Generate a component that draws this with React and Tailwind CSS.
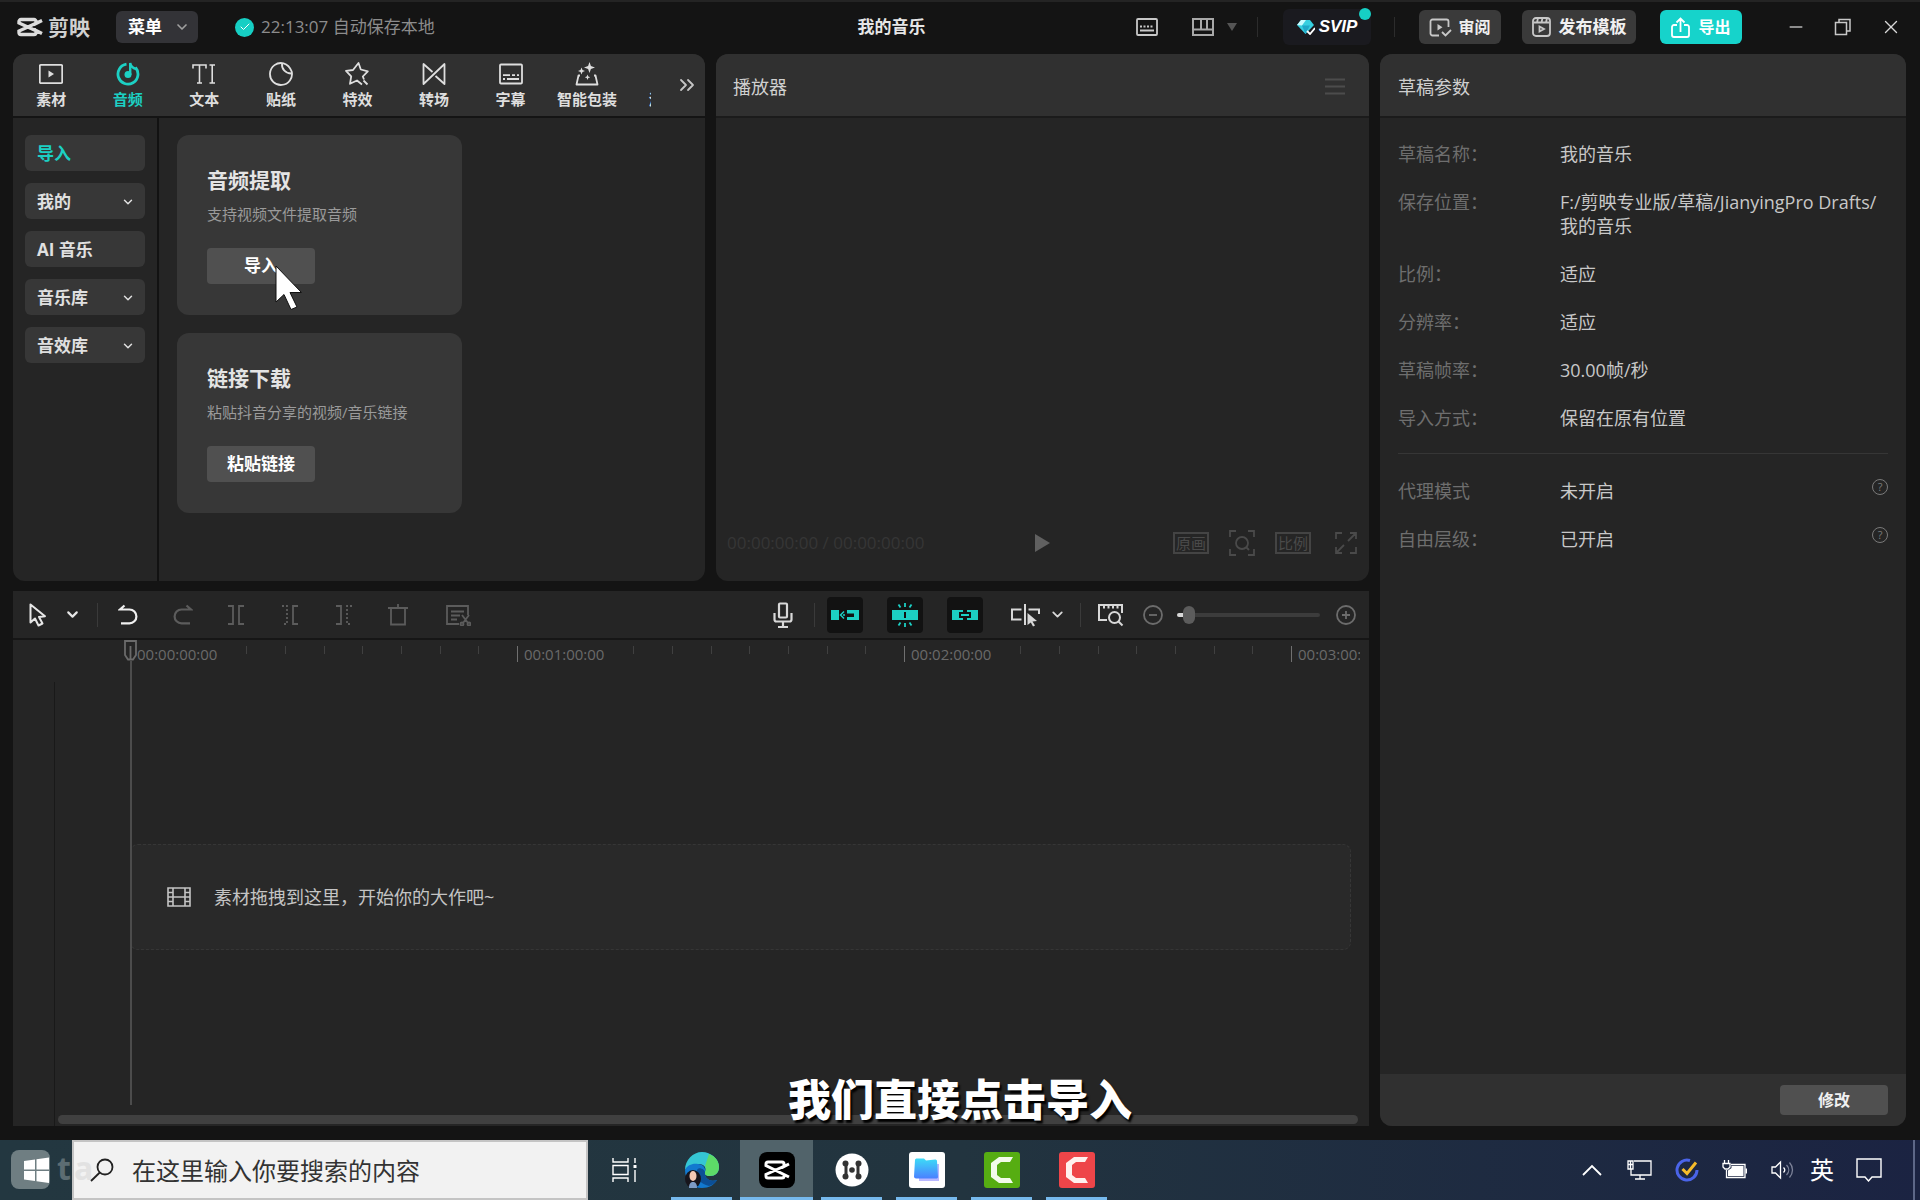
import React, { useState } from "react";
import { ChevronDown, ChevronsRight, X, Minus, Check } from "lucide-react";

const Icon = ({ size = 24, width, height, className = "", box = "0 0 24 24", children }) => (
  <svg
    width={width || size}
    height={height || size}
    viewBox={box}
    fill="none"
    stroke="currentColor"
    strokeWidth="1.8"
    className={`shrink-0 ${className}`}
    aria-hidden="true"
  >
    {children}
  </svg>
);

const CutLogo = ({ className, width = 26, height = 20 }) => (
  <Icon width={width} height={height} box="0 0 26 20" className={className}>
    <path d="M25 3.5 19 6.5V4.5a2 2 0 0 0-2-2H4a2 2 0 0 0-2 2V6l23 10.500M25 3.500 2 14v1.500a2 2 0 0 0 2 2h13a2 2 0 0 0 2-2v-2l6 3" strokeWidth="3.4" />
  </Icon>
);

const tabs = [
  {
    name: "素材",
    icon: (
      <>
        <rect x="0.8" y="2.800" width="22.400" height="18.400" rx="1.200" />
        <path d="M9.500 8.500v7l5.500-3.500z" fill="currentColor" stroke="none" />
      </>
    ),
  },
  {
    name: "音频",
    icon: (
      <>
        <path d="M10.500 2.200A10 10 0 1 0 19.500 5.500" strokeWidth="2.800" />
        <circle cx="12" cy="12.500" r="3.500" fill="currentColor" stroke="none" />
        <path d="M14.200 13V1c.5 3 2.500 5 6 6" strokeWidth="2.400" />
      </>
    ),
  },
  {
    name: "文本",
    icon: (
      <path d="M1 6.500V3h13v3.500M7.500 3v18M5 21h5M17.500 3H23M17.500 21H23M20.200 3v18" strokeWidth="1.600" />
    ),
  },
  {
    name: "贴纸",
    icon: (
      <>
        <path d="M14.500 1.300A11 11 0 1 0 22.700 9.500C21 5 18.500 2.500 14.500 1.300z" strokeLinejoin="round" />
        <path d="M13 1.200c-.5 6 3.500 10.500 9.800 10.300" />
      </>
    ),
  },
  {
    name: "特效",
    icon: (
      <path d="M17 22.500 12 18.500 5 21.800l1.200-7.500L1 8.800l7-.8L13.500 1l2.300 6.500 7 1.800-5 5.200 1.200 3M18.500 18.500l4 4" strokeLinejoin="round" />
    ),
  },
  {
    name: "转场",
    icon: (
      <path d="M10.500 10 1.500 2v20L22.500 2v20l-9-8" strokeLinejoin="round" />
    ),
  },
  {
    name: "字幕",
    icon: (
      <>
        <rect x="1" y="2.500" width="22" height="19" rx="1" />
        <path d="M4 13.200h7M13 13.200h3M18 13.200h2M4 17h2M8 17h12" />
      </>
    ),
  },
  {
    name: "智能包装",
    icon: (
      <>
        <path d="M5 13.500H3.500L1.500 22.500h21L20.500 13.500H19" strokeLinejoin="round" />
        <path
          d="M14.500 0l1.400 4.100L20 5.500l-4.100 1.400L14.500 11l-1.400-4.100L9 5.500l4.100-1.400zM6.500 5.500l1 2.500L10 9l-2.500 1-1 2.500-1-2.500L3 9l2.500-1zM12.500 12.500l.8 2 2 .8-2 .8-.8 2-.8-2-2-.8 2-.8z"
          fill="currentColor"
          stroke="none"
        />
      </>
    ),
  },
  { name: "滤镜", icon: null },
];

const categories = [
  { name: "导入", open: false },
  { name: "我的", open: true },
  { name: "AI 音乐", open: false },
  { name: "音乐库", open: true },
  { name: "音效库", open: true },
];

const draftInfo = [
  ["草稿名称：", "我的音乐"],
  ["保存位置：", "F:/剪映专业版/草稿/JianyingPro Drafts/我的音乐"],
  ["比例：", "适应"],
  ["分辨率：", "适应"],
  ["草稿帧率：", "30.00帧/秒"],
  ["导入方式：", "保留在原有位置"],
];

const draftModes = [
  ["代理模式", "未开启"],
  ["自由层级：", "已开启"],
];

const TitleBar = () => (
  <header className="flex items-center h-[54px] shrink-0 border-t-2 border-[#242424] pb-[2px] pr-[18px]">
    <div className="flex items-center w-[647px] pl-[17px]">
      <CutLogo className="text-[#dcdcdc]" />
      <span className="ml-[5px] w-[68px] text-[21px] leading-8 font-bold text-[#d0d0d0]">剪映</span>
      <button className="flex items-center justify-between w-[82px] h-8 rounded-md bg-[#333337] pl-3 pr-2 text-[17px] font-bold text-white">
        菜单
        <ChevronDown size={16} strokeWidth={2.500} className="text-[#a0a0a0]" />
      </button>
      <span className="ml-[37px] flex items-center justify-center size-[19px] rounded-full bg-[#16cfc4] text-white">
        <Check size={12} />
      </span>
      <span className="ml-[7px] text-[17px] text-[#8c8c8c]">22:13:07 自动保存本地</span>
    </div>
    <h1 className="flex-1 text-center text-[17px] font-bold text-[#e6e6e6]">我的音乐</h1>
    <div className="flex items-center">
      <button aria-label="快捷键" className="text-[#c8c8c8]">
        <Icon width={22} height={18} box="0 0 22 18">
          <rect x="1" y="1" width="20" height="16" rx="1" />
          <path d="M4 8.500h2M7.500 8.500h2M11 8.500h2M14.500 8.500h2M4 12.500h14" />
        </Icon>
      </button>
      <button aria-label="布局" className="ml-[34px] flex items-center text-[#a8a8a8]">
        <Icon width={22} height={18} box="0 0 22 18">
          <path d="M1 1h20v16H1zM1 11.500h20M9 1v10.500M15 1v10.500" strokeWidth="2" />
        </Icon>
        <Icon width={10} height={8} box="0 0 10 8" className="ml-[13px] text-[#555]">
          <path d="M0 0h10L5 8z" fill="currentColor" stroke="none" />
        </Icon>
      </button>
      <span className="ml-5 w-px h-5 bg-[#2c2c2c]" />
      <button className="relative ml-[25px] flex items-center justify-center gap-1 w-[88px] h-9 rounded-md bg-[#1a1a1f] font-['Liberation_Sans',sans-serif] text-[17px] font-bold italic text-white">
        <Icon width={18} height={16} box="0 0 18 16">
          <path d="M4 1h9l4 5-8.500 9L0 6z" fill="#36cfe0" stroke="none" />
          <path d="M4 1h5L5 6.500 0 6z" fill="#c9fbff" stroke="none" />
          <path d="M5 6.500h8L8.500 15z" fill="#1fa8c8" stroke="none" />
          <path d="m10 12 3 3 5-6" stroke="#fff" />
        </Icon>
        SVIP
        <span className="absolute right-0 -top-px size-3 rounded-full bg-[#16cfc4]" />
      </button>
      <span className="ml-[23px] w-px h-5 bg-[#2c2c2c]" />
      <button className="ml-6 flex items-center justify-center gap-[6px] w-[82px] h-[34px] rounded-md bg-[#3a3a3a] text-[16px] font-bold text-[#f0f0f0]">
        <Icon width={23} height={19} box="0 0 23 19" className="text-[#c8c8c8]">
          <path d="M10 17.500H3.500a2 2 0 0 1-2-2v-12a2 2 0 0 1 2-2h14a2 2 0 0 1 2 2V9" />
          <path d="M8.500 6v6.500l5-3.200z" fill="currentColor" stroke="none" />
          <path d="m13 14 3.500 3.500L22 12" />
        </Icon>
        审阅
      </button>
      <button className="ml-[21px] flex items-center justify-center gap-2 w-[114px] h-[34px] rounded-md bg-[#3a3a3a] text-[17px] font-bold text-[#f0f0f0]">
        <Icon width={19} height={20} box="0 0 19 20" className="text-[#c8c8c8]">
          <rect x="1" y="1" width="17" height="18" rx="3" />
          <path d="M1.500 5.500h16M6 1 5 5.500M10.500 1l-1 4.500M15 1l-1 4.500" />
          <path d="M7.500 9.500v5l4.500-2.500z" />
        </Icon>
        发布模板
      </button>
      <button className="ml-6 flex items-center justify-center gap-2 w-[82px] h-[34px] rounded-md bg-[#16d3cb] text-[16px] font-bold text-white">
        <Icon width={19} height={21} box="0 0 19 21">
          <path d="M6 8H3a2 2 0 0 0-2 2v8a2 2 0 0 0 2 2h13a2 2 0 0 0 2-2v-8a2 2 0 0 0-2-2h-3M9.500 15V1.500M5.500 5.500l4-4 4 4" />
        </Icon>
        导出
      </button>
      <button aria-label="最小化" className="ml-[44px] text-[#b4b4b4]">
        <Minus size={20} strokeWidth={1.800} />
      </button>
      <button aria-label="还原" className="ml-[28px] text-[#c8c8c8]">
        <Icon size={18} box="0 0 18 18" >
          <path d="M1.500 4.500h11v12h-11zM5 4.500v-3h11v11.500h-3.500" strokeWidth="1.500" />
        </Icon>
      </button>
      <button aria-label="关闭" className="ml-[28px] text-[#d8d8d8]">
        <X size={22} strokeWidth={1.500} />
      </button>
    </div>
  </header>
);

const ImportCard = ({ title, desc, action, children }) => (
  <section className="w-[285px] h-[180px] rounded-xl bg-[#373737] px-[30px] pt-[30px]">
    <h2 className="text-[21px] leading-[30px] font-bold text-[#e4e4e4]">{title}</h2>
    <p className="mt-[7px] text-[15px] leading-6 text-[#9a9a9a]">{desc}</p>
    <button className="relative mt-[22px] w-[108px] h-9 rounded bg-[#505050] text-[17px] font-bold text-white">
      {action}
      {children}
    </button>
  </section>
);

const MediaPanel = () => {
  const [activeTab, setActiveTab] = useState("音频");
  const [category, setCategory] = useState("导入");

  return (
    <section className="flex flex-col flex-[692] min-w-0 rounded-xl bg-[#252525] overflow-hidden">
      <nav className="flex items-center h-[64px] shrink-0 bg-[#303030] border-b-2 border-[#141414]">
        <div className="flex w-[638px] pt-[2px] overflow-hidden">
          {tabs.map((tab) => (
            <button
              key={tab.name}
              onClick={() => setActiveTab(tab.name)}
              className={`flex flex-col items-center shrink-0 w-[12%] gap-px text-[15px] leading-6 font-bold ${activeTab === tab.name ? "text-[#1cd0c4]" : "text-[#dedede]"}`}
            >
              <Icon>{tab.icon}</Icon>
              {tab.name}
            </button>
          ))}
        </div>
        <button aria-label="更多" className="ml-[24px] text-[#c4c4c4]">
          <ChevronsRight size={24} strokeWidth={1.800} />
        </button>
      </nav>
      <div className="flex flex-1">
        <aside className="flex flex-col gap-3 w-[146px] px-3 pt-[17px] border-r-2 border-[#121212]">
          {categories.map((item) => (
            <button
              key={item.name}
              onClick={() => setCategory(item.name)}
              className={`flex items-center justify-between h-9 rounded-md bg-[#373737] pl-3 pr-[10px] pt-px text-[17px] font-bold ${category === item.name ? "text-[#1cd0c4]" : "text-[#e0e0e0]"}`}
            >
              {item.name}
              {item.open && <ChevronDown size={14} strokeWidth={2.500} />}
            </button>
          ))}
        </aside>
        <div className="flex flex-col gap-[18px] pl-[18px] pt-[17px]">
          <ImportCard title="音频提取" desc="支持视频文件提取音频" action="导入">
            <svg width="30" height="46" viewBox="0 0 30 46" className="absolute left-[68px] top-[17px]" aria-hidden="true">
              <path d="M1 1v36l8-7.500 7 15 6-2.500-7-14.500h11.500z" fill="#fff" stroke="#111" />
            </svg>
          </ImportCard>
          <ImportCard title="链接下载" desc="粘贴抖音分享的视频/音乐链接" action="粘贴链接" />
        </div>
      </div>
    </section>
  );
};

const PlayerPanel = () => (
  <section className="flex flex-col flex-[653] min-w-0 rounded-xl bg-[#252525] overflow-hidden">
    <div className="flex items-center justify-between h-[64px] shrink-0 bg-[#303030] border-b-2 border-[#1b1b1b] pl-[17px] pr-6 pt-1">
      <h2 className="text-[18px] text-[#cfcfcf]">播放器</h2>
      <button aria-label="播放器菜单" className="text-[#4c4c4c]">
        <Icon width={20} height={18} box="0 0 20 18">
          <path d="M0 1.500h20M0 8.500h20M0 15.500h20" strokeWidth="2" />
        </Icon>
      </button>
    </div>
    <div className="flex-1" />
    <div className="flex items-center h-[22px] mb-[27px] pl-[11px] pr-3 text-[#4a4a4a]">
      <span className="flex-1 text-[17px] text-[#363636]">00:00:00:00 / 00:00:00:00</span>
      <button aria-label="播放">
        <Icon width={15} height={18} box="0 0 15 18">
          <path d="M0 0v18l15-9z" fill="#606060" stroke="none" />
        </Icon>
      </button>
      <div className="flex flex-1 items-center justify-end gap-5">
        <button className="w-9 h-[22px] border-2 border-[#444] text-[15px] leading-[18px]">原画</button>
        <button aria-label="缩放">
          <Icon size={26} box="0 0 26 26">
            <path d="M1 7V1h6M19 1h6v6M25 19v6h-6M7 25H1v-6M17 17l3 3" />
            <circle cx="13" cy="13" r="6" />
          </Icon>
        </button>
        <button className="w-9 h-[22px] border-2 border-[#444] text-[15px] leading-[18px]">比例</button>
        <button aria-label="全屏" className="ml-1">
          <Icon size={22} box="0 0 22 22">
            <path d="M1 7V1h6M15 1h6v6M21 15v6h-6M7 21H1v-6M1 21l8-8M13 9l8-8" />
          </Icon>
        </button>
      </div>
    </div>
  </section>
);

const Row = ({ label, value, help }) => (
  <div className="flex text-[18px] leading-6">
    <dt className="w-[162px] shrink-0 text-[#6e6e6e]">{label}</dt>
    <dd className="flex-1 text-[#c8c8c8]">{value}</dd>
    {help && (
      <dd className="text-[#7a7a7a]">
        <button aria-label="帮助" className="flex items-center justify-center size-4 rounded-full border border-[#7a7a7a] text-[11px] leading-3">
          ?
        </button>
      </dd>
    )}
  </div>
);

const DraftPanel = () => (
  <section className="flex flex-col w-[526px] shrink-0 rounded-xl bg-[#252525] overflow-hidden">
    <div className="flex items-center h-[64px] shrink-0 bg-[#303030] border-b-2 border-[#1b1b1b] pl-[18px] pt-1">
      <h2 className="text-[18px] text-[#cfcfcf]">草稿参数</h2>
    </div>
    <div className="flex-1 px-[18px] pt-6">
      <dl className="flex flex-col gap-6">
        {draftInfo.map(([label, value]) => (
          <Row key={label} label={label} value={value} />
        ))}
      </dl>
      <hr className="mt-[23px] mb-[25px] border-[#363636]" />
      <dl className="flex flex-col gap-6">
        {draftModes.map(([label, value]) => (
          <Row key={label} label={label} value={value} help />
        ))}
      </dl>
    </div>
    <div className="flex items-center justify-end h-[52px] shrink-0 bg-[#303030] pr-[18px]">
      <button className="w-[108px] h-[30px] rounded bg-[#505050] text-[16px] font-bold text-[#f0f0f0]">修改</button>
    </div>
  </section>
);

const Divider = ({ className = "" }) => <span className={`w-px h-6 bg-[#3a3a3a] ${className}`} />;

const Toolbar = () => {
  const [zoom, setZoom] = useState(0);

  return (
    <div className="flex items-center justify-between h-[49px] shrink-0 border-b-2 border-[#161616] pl-[15px] pr-[13px]">
      <div className="flex items-center text-[#5c5c5c]">
        <button aria-label="选择" className="flex items-center gap-4 text-[#e6e6e6]">
          <Icon width={20} height={24} box="0 0 20 24">
            <path d="M2.500 1.500v18l4.500-4 3.500 7 4-2-3.500-6.500 6-.8z" strokeWidth="2" strokeLinejoin="round" />
          </Icon>
          <ChevronDown size={17} strokeWidth={3} />
        </button>
        <Divider className="ml-[16px]" />
        <button aria-label="撤销" className="ml-[20px] text-[#f0f0f0]">
          <Icon width={21} height={22} box="0 0 21 22">
            <path d="M6.500 1.500 2 5.500h9.500a6.800 6.800 0 0 1 0 13.800H3" strokeWidth="2.200" />
          </Icon>
        </button>
        <button aria-label="重做" className="ml-[33px]">
          <Icon width={21} height={22} box="0 0 21 22">
            <path d="M14.500 1.500l4.500 4H9.500a6.800 6.800 0 0 0 0 13.800H18" strokeWidth="2.200" />
          </Icon>
        </button>
        <button aria-label="分割" className="ml-[34px]">
          <Icon width={18} height={20} box="0 0 18 20">
            <path d="M1 1h5v18H1M17 1h-5v18h5" />
          </Icon>
        </button>
        <button aria-label="向左裁剪" className="ml-9">
          <Icon width={18} height={20} box="0 0 18 20">
            <path d="M17 1h-5v18h5" />
            <path d="M1 1h5v18H1" strokeDasharray="2 2" />
          </Icon>
        </button>
        <button aria-label="向右裁剪" className="ml-9">
          <Icon width={18} height={20} box="0 0 18 20">
            <path d="M1 1h5v18H1" />
            <path d="M17 1h-5v18h5" strokeDasharray="2 2" />
          </Icon>
        </button>
        <button aria-label="删除" className="ml-[35px]">
          <Icon width={20} height={22} box="0 0 20 22">
            <path d="M0 4h20M3 4v16.500h14V4M10 4V0" />
          </Icon>
        </button>
        <button aria-label="智能剪口播" className="ml-[37px]">
          <Icon width={26} height={22} box="0 0 26 22">
            <path d="M14 20H2V2h21v9M6 7.500h13M6 11.500h9M6 15.500h6M17 11l6 8M24 11l-6 8" />
            <circle cx="17" cy="20" r="1.500" />
            <circle cx="24" cy="20" r="1.500" />
          </Icon>
        </button>
      </div>

      <div className="flex items-center text-[#d8d8d8]">
        <button aria-label="录音">
          <Icon width={20} height={26} box="0 0 20 26">
            <rect x="6" y="1.500" width="8" height="14" rx="1" strokeWidth="2.200" />
            <path d="M1.500 11v6.500a2 2 0 0 0 2 2h13a2 2 0 0 0 2-2V11M10 19.500V25M5 25h10" strokeWidth="2.200" />
          </Icon>
        </button>
        <Divider className="ml-[21px]" />
        <button aria-label="主轨磁吸" className="ml-3 flex items-center justify-center size-9 rounded bg-[#121212] text-[#1cd0c4]">
          <Icon width={28} height={12} box="0 0 28 12">
            <path d="M0 1h8v10H0z" fill="currentColor" stroke="none" />
            <path d="M13 2.500 9.500 6l3.500 3.500M12 6h2" strokeWidth="1.500" />
            <path d="M16 1h12v10H16V8h7V4.500h-7z" fill="currentColor" stroke="none" />
          </Icon>
        </button>
        <button aria-label="自动吸附" className="ml-6 flex items-center justify-center size-9 rounded bg-[#121212] text-[#1cd0c4]">
          <Icon width={26} height={26} box="0 0 26 26">
            <path d="M0 8h12v10H0zM14 8h12v10H14zM12 8h2v2h-2zM12 16h2v2h-2z" fill="currentColor" stroke="none" />
            <path d="M13 1v4M6.500 2.500l2 3M19.500 2.500l-2 3M13 21v4M6.500 23.500l2-3M19.500 23.500l-2-3" />
          </Icon>
        </button>
        <button aria-label="联动" className="ml-6 flex items-center justify-center size-9 rounded bg-[#121212] text-[#1cd0c4]">
          <Icon width={26} height={12} box="0 0 26 12">
            <path d="M0 1h11v2H7v6h4v2H0zM26 1H15v2h4v6h-4v2h11z" fill="currentColor" stroke="none" />
            <path d="M9 6h8" strokeWidth="2" />
          </Icon>
        </button>
        <button aria-label="预览轴" className="ml-[28px] flex items-center gap-[9px]">
          <Icon width={29} height={24} box="0 0 29 24">
            <path d="M10.500 6.500H1v10h9.500M14 1v21M17.500 6.500H28V11" strokeWidth="2" />
            <path d="m16.500 10 9.500 8-4.500.5 2.500 4-2 1-2.200-4-3.300 2.500z" fill="currentColor" stroke="none" />
          </Icon>
          <ChevronDown size={17} strokeWidth={2.500} />
        </button>
        <Divider className="ml-[14px]" />
        <button aria-label="时间线缩放" className="ml-4">
          <Icon width={28} height={24} box="0 0 28 24">
            <path d="M10 17H2V2h23v8M7 2v3.500M11.500 2v3.500M16 2v3.500M20.500 2v3.500" strokeWidth="2" />
            <circle cx="17.500" cy="14.500" r="5.500" strokeWidth="2" />
            <path d="m21.500 18.500 4 4" strokeWidth="2" />
          </Icon>
        </button>
        <button aria-label="缩小" className="ml-[18px] text-[#6c6c6c]">
          <Icon size={20} box="0 0 20 20">
            <circle cx="10" cy="10" r="9" />
            <path d="M6 10h8" />
          </Icon>
        </button>
        <input
          type="range"
          aria-label="时间线比例"
          value={zoom}
          onChange={(e) => setZoom(e.target.value)}
          className="ml-[14px] w-[143px] h-1 appearance-none rounded-full bg-[#3c3c3c] border-l-6 border-[#d8d8d8] [&::-webkit-slider-thumb]:appearance-none [&::-webkit-slider-thumb]:w-3 [&::-webkit-slider-thumb]:h-[18px] [&::-webkit-slider-thumb]:rounded-md [&::-webkit-slider-thumb]:bg-[#5c5c5c]"
        />
        <button aria-label="放大" className="ml-[16px] text-[#6c6c6c]">
          <Icon size={20} box="0 0 20 20">
            <circle cx="10" cy="10" r="9" />
            <path d="M6 10h8M10 6v8" />
          </Icon>
        </button>
      </div>
    </div>
  );
};

const labels = ["00:00:00:00", "00:01:00:00", "00:02:00:00", "00:03:00:00"];

const Ruler = () => (
  <div className="flex h-[30px] ml-[117px] mr-[9px] overflow-hidden">
    {labels.map((label, i) => (
      <div key={label} className="relative grid grid-cols-10 shrink-0 w-[387px] pt-[6px]">
        {Array.from({ length: 10 }, (_, n) => (
          <span
            key={n}
            className={`border-l ${n === 0 && i > 0 ? "h-4 border-[#707070]" : n > 2 ? "h-2 border-[#404040]" : "h-2 border-transparent"}`}
          />
        ))}
        <span className="absolute left-[7px] top-1 text-[15px] leading-5 text-[#6a6a6a]">{label}</span>
      </div>
    ))}
  </div>
);

const Timeline = () => (
  <section className="flex flex-col flex-1 bg-[#252525]">
    <Toolbar />
    <div className="relative flex flex-col flex-1">
      <Ruler />
      <div className="flex flex-col flex-1 mt-[12px] ml-[41px] border-l border-[#191919]">
        <div className="flex items-center gap-[23px] mt-[162px] ml-[75px] mr-[18px] h-[106px] rounded-lg border border-dashed border-[#363636] bg-[#292929] pl-9 text-[#c4c4c4]">
          <Icon width={24} height={20} box="0 0 24 20">
            <path d="M1 1h22v18H1zM6 1v18M18 1v18M6 10h12M1 5.500h5M1 10h5M1 14.500h5M18 5.500h5M18 10h5M18 14.500h5" strokeWidth="1.600" />
          </Icon>
          <p className="text-[18px]">素材拖拽到这里，开始你的大作吧~</p>
        </div>
        <div className="mt-auto mb-[2px] ml-[3px] mr-[11px] h-[9px] rounded-full bg-[#404040]" />
      </div>
      {/* playhead */}
      <div className="absolute left-[111px] top-0 bottom-[21px] flex flex-col items-center">
        <Icon width={13} height={21} box="0 0 13 21" className="text-[#6a6a6a]">
          <path d="M1 1h11v14l-3 4.500H4L1 15zM6.500 6v13" />
        </Icon>
        <div className="flex-1 w-[2px] bg-[#4c4c4c]" />
      </div>
    </div>
  </section>
);

const TaskApp = ({ name, active, children }) => (
  <button
    aria-label={name}
    className={`flex flex-col items-center justify-between h-full w-[73px] pt-3 ${active ? "bg-[#51636a]" : ""}`}
  >
    <svg width="36" height="36" viewBox="0 0 36 36" fill="none" aria-hidden="true">
      {children}
    </svg>
    <span className={`h-[3px] bg-[#76b9ed] ${active ? "w-full" : "w-[61px]"}`} />
  </button>
);

const Taskbar = () => (
  <footer className="flex items-center h-[60px] shrink-0 bg-linear-to-r from-[#233740] via-[#22343f] to-[#1b2342]">
    <button aria-label="开始" className="relative w-[72px] h-full">
      <span className="absolute left-[11px] top-[10px] size-[39px] rounded-lg bg-[#6f7e82]" />
      <span className="absolute left-[57px] top-2 text-[32px] leading-10 font-bold text-[#5c6c72]">t</span>
      <svg width="26" height="26" viewBox="0 0 26 26" className="absolute left-6 top-[17px]" aria-hidden="true">
        <path d="M0 4l11-1.500v10H0zM12.500 2.200 25 .5v12H12.500zM0 14h11v10L0 22.500zM12.500 14H25v12l-12.500-1.700z" fill="#fff" />
      </svg>
    </button>
    <label className="relative flex items-center gap-[18px] w-[516px] h-full border-2 border-[#c4c4c4] bg-[#f2f2f2] pl-4 text-[#222]">
      <span className="absolute left-0 top-[6px] text-[32px] leading-10 font-bold text-[#e2e2e2]">a</span>
      <Icon size={24} className="relative">
        <circle cx="15" cy="9" r="7.500" />
        <path d="M9.800 14.500 1 23" />
      </Icon>
      <input
        type="text"
        aria-label="搜索"
        placeholder="在这里输入你要搜索的内容"
        className="flex-1 min-w-0 bg-transparent pt-[2px] text-[24px] text-[#222] placeholder:text-[#333] outline-none"
      />
    </label>
    <button aria-label="任务视图" className="ml-6 mr-[27px] text-white">
      <Icon width={26} height={24} box="0 0 26 24">
        <path d="M1 0v4h15V0M1 24v-4h15v4M1 7.500h15v9H1zM23 0v5M23 12v12" strokeWidth="1.400" />
        <path d="M21.500 7h3v3h-3z" fill="currentColor" stroke="none" />
      </Icon>
    </button>
    <nav className="flex h-full gap-[2px]">
      <TaskApp name="Edge">
        <path d="M1 18C1 8 9 0 18 0s17 7 17 15c0 6-4 9-9 9-4 0-6-2-5-4 2-4-1-8-6-8-7 0-12 3-14 6z" fill="#35c6d4" />
        <path d="M25 2c6 2 10 7 10 13 0 6-4 9-9 9-4 0-6-2-5-4 2-3 0-6 0-6z" fill="#5ddb68" />
        <path d="M1 18c2-5 8-7 13-6 5 0 8 4 7 8-1 5 4 11 12 8-3 5-8 8-15 8C8 36 1 28 1 18z" fill="#1279cf" />
        <path d="M13 18c-1 8 3 14 12 16 4-1 7-4 8-6-8 3-13-3-12-8 0-2-6-6-8-2z" fill="#0c4f96" />
        <ellipse cx="9" cy="27" rx="8" ry="9" fill="#17151c" />
        <ellipse cx="9" cy="24" rx="3.500" ry="5" fill="#f3c8b4" />
        <path d="M5 36c0-5 2-6 4-6s4 1 4 6z" fill="#7d9cc6" />
      </TaskApp>
      <TaskApp name="剪映" active>
        <rect width="36" height="36" rx="8" fill="#000" />
        <path d="M30 12l-5 2.500V12a2 2 0 0 0-2-2H9a2 2 0 0 0-2 2v1.500L30 25M30 12 7 22.500V24a2 2 0 0 0 2 2h14a2 2 0 0 0 2-2v-2" stroke="#fff" strokeWidth="3" />
      </TaskApp>
      <TaskApp name="影音">
        <circle cx="18" cy="18" r="16.500" fill="#fff" />
        <path d="M12 12v12M24 12v12" stroke="#333" strokeWidth="3" />
        <circle cx="11.500" cy="11.500" r="3" fill="#333" />
        <circle cx="11.500" cy="24.500" r="3" fill="#333" />
        <circle cx="24.500" cy="11.500" r="3" fill="#333" />
        <circle cx="24.500" cy="24.500" r="3" fill="#333" />
        <circle cx="18" cy="18" r="2.800" fill="#333" />
      </TaskApp>
      <TaskApp name="文件">
        <defs>
          <linearGradient id="folder" x1="0" y1="0" x2="0" y2="1">
            <stop offset="0" stopColor="#3ddcf7" />
            <stop offset="1" stopColor="#4a80ff" />
          </linearGradient>
        </defs>
        <rect width="36" height="36" rx="3" fill="#fff" />
        <path d="M10 12h20v17H10z" fill="#b9b8ff" />
        <path d="M6 8c0-1 1-1.500 2-1.500h7l2 2 9-1c1 0 2 .5 2 1.500l1 16c0 1-1 1.500-2 1.500H7c-1 0-2-1-2-2z" fill="url(#folder)" />
      </TaskApp>
      <TaskApp name="Camtasia">
        <rect width="36" height="36" rx="3" fill="#56ad12" />
        <path d="M29 5H15l-8 6v14l8 6h14l-3-5h-9l-4-3V13l4-3h9z" fill="#f2fbea" />
      </TaskApp>
      <TaskApp name="Camtasia Recorder">
        <rect width="36" height="36" rx="3" fill="#ee4549" />
        <path d="M29 5H15l-8 6v14l8 6h14l-3-5h-9l-4-3V13l4-3h9z" fill="#fff0ee" />
      </TaskApp>
    </nav>
    <div className="flex items-center ml-auto h-full text-white">
      <button aria-label="显示隐藏的图标">
        <Icon width={20} height={12} box="0 0 20 12">
          <path d="m1 11 9-9 9 9" />
        </Icon>
      </button>
      <button aria-label="网络" className="ml-[25px]">
        <Icon width={25} height={20} box="0 0 25 20">
          <path d="M7 1h17v14H4V9M1 1h5v8H1zM3.500 1v8M1 4.500h5M13 15v4M8 19h10" strokeWidth="1.300" />
        </Icon>
      </button>
      <button aria-label="待办" className="ml-[23px]">
        <Icon size={24}>
          <path d="M15 2.500A10 10 0 1 0 22 12" stroke="#4a64e8" strokeWidth="3" />
          <path d="m7.500 11 4.500 4.500 9-11" stroke="#f5bb2a" strokeWidth="3" />
        </Icon>
      </button>
      <button aria-label="电源" className="ml-[23px]">
        <Icon width={25} height={20} box="0 0 25 20">
          <path d="M9 4.500h14v13H4.500V10M24.500 8.500v5M2.500 0v3M6.500 0v3M1 3.500h7v3.500l-2 2H3L1 7z" strokeWidth="1.300" />
          <path d="M9.500 6h12v10H6v-5.500l3.500-2.500z" fill="currentColor" stroke="none" />
        </Icon>
      </button>
      <button aria-label="音量" className="ml-[24px]">
        <Icon width={23} height={20} box="0 0 23 20">
          <path d="M1 7v6h3.500L9.500 18V2L4.500 7zM12.500 7.500c1.500 1.500 1.500 3.500 0 5" strokeWidth="1.300" />
          <path d="M15.500 5c3 3 3 7 0 10M18.500 2.500c4 4.500 4 10.500 0 15" stroke="#7c8298" strokeWidth="1.300" />
        </Icon>
      </button>
      <button className="ml-[16px] text-[24px]">英</button>
      <button aria-label="通知" className="ml-[22px] mr-[31px]">
        <Icon width={26} height={24} box="0 0 26 24">
          <path d="M1 1h24v18h-9l-3.500 4L9 19H1z" strokeWidth="1.400" />
        </Icon>
      </button>
      <span className="w-[2px] mr-[5px] h-full bg-[#5d6788]" />
    </div>
  </footer>
);

const App = () => {
  return (
    <div className="relative flex flex-col w-full h-screen bg-[#141414] font-['Open_Sans','Noto_Sans_CJK_SC',sans-serif]">
      <TitleBar />
      <main className="flex flex-1 min-h-0 gap-[11px] pl-[13px] pr-[14px] pb-[14px]">
        <div className="flex flex-col flex-1 min-w-0 gap-[10px]">
          <div className="flex gap-[11px] h-[527px] shrink-0">
            <MediaPanel />
            <PlayerPanel />
          </div>
          <Timeline />
        </div>
        <DraftPanel />
      </main>
      <Taskbar />
      <p className="absolute inset-x-0 bottom-[68px] text-center text-[43px] leading-[64px] font-black text-white [text-shadow:2px_3px_2px_#000] pointer-events-none">
        我们直接点击导入
      </p>
    </div>
  );
};

export default App;
